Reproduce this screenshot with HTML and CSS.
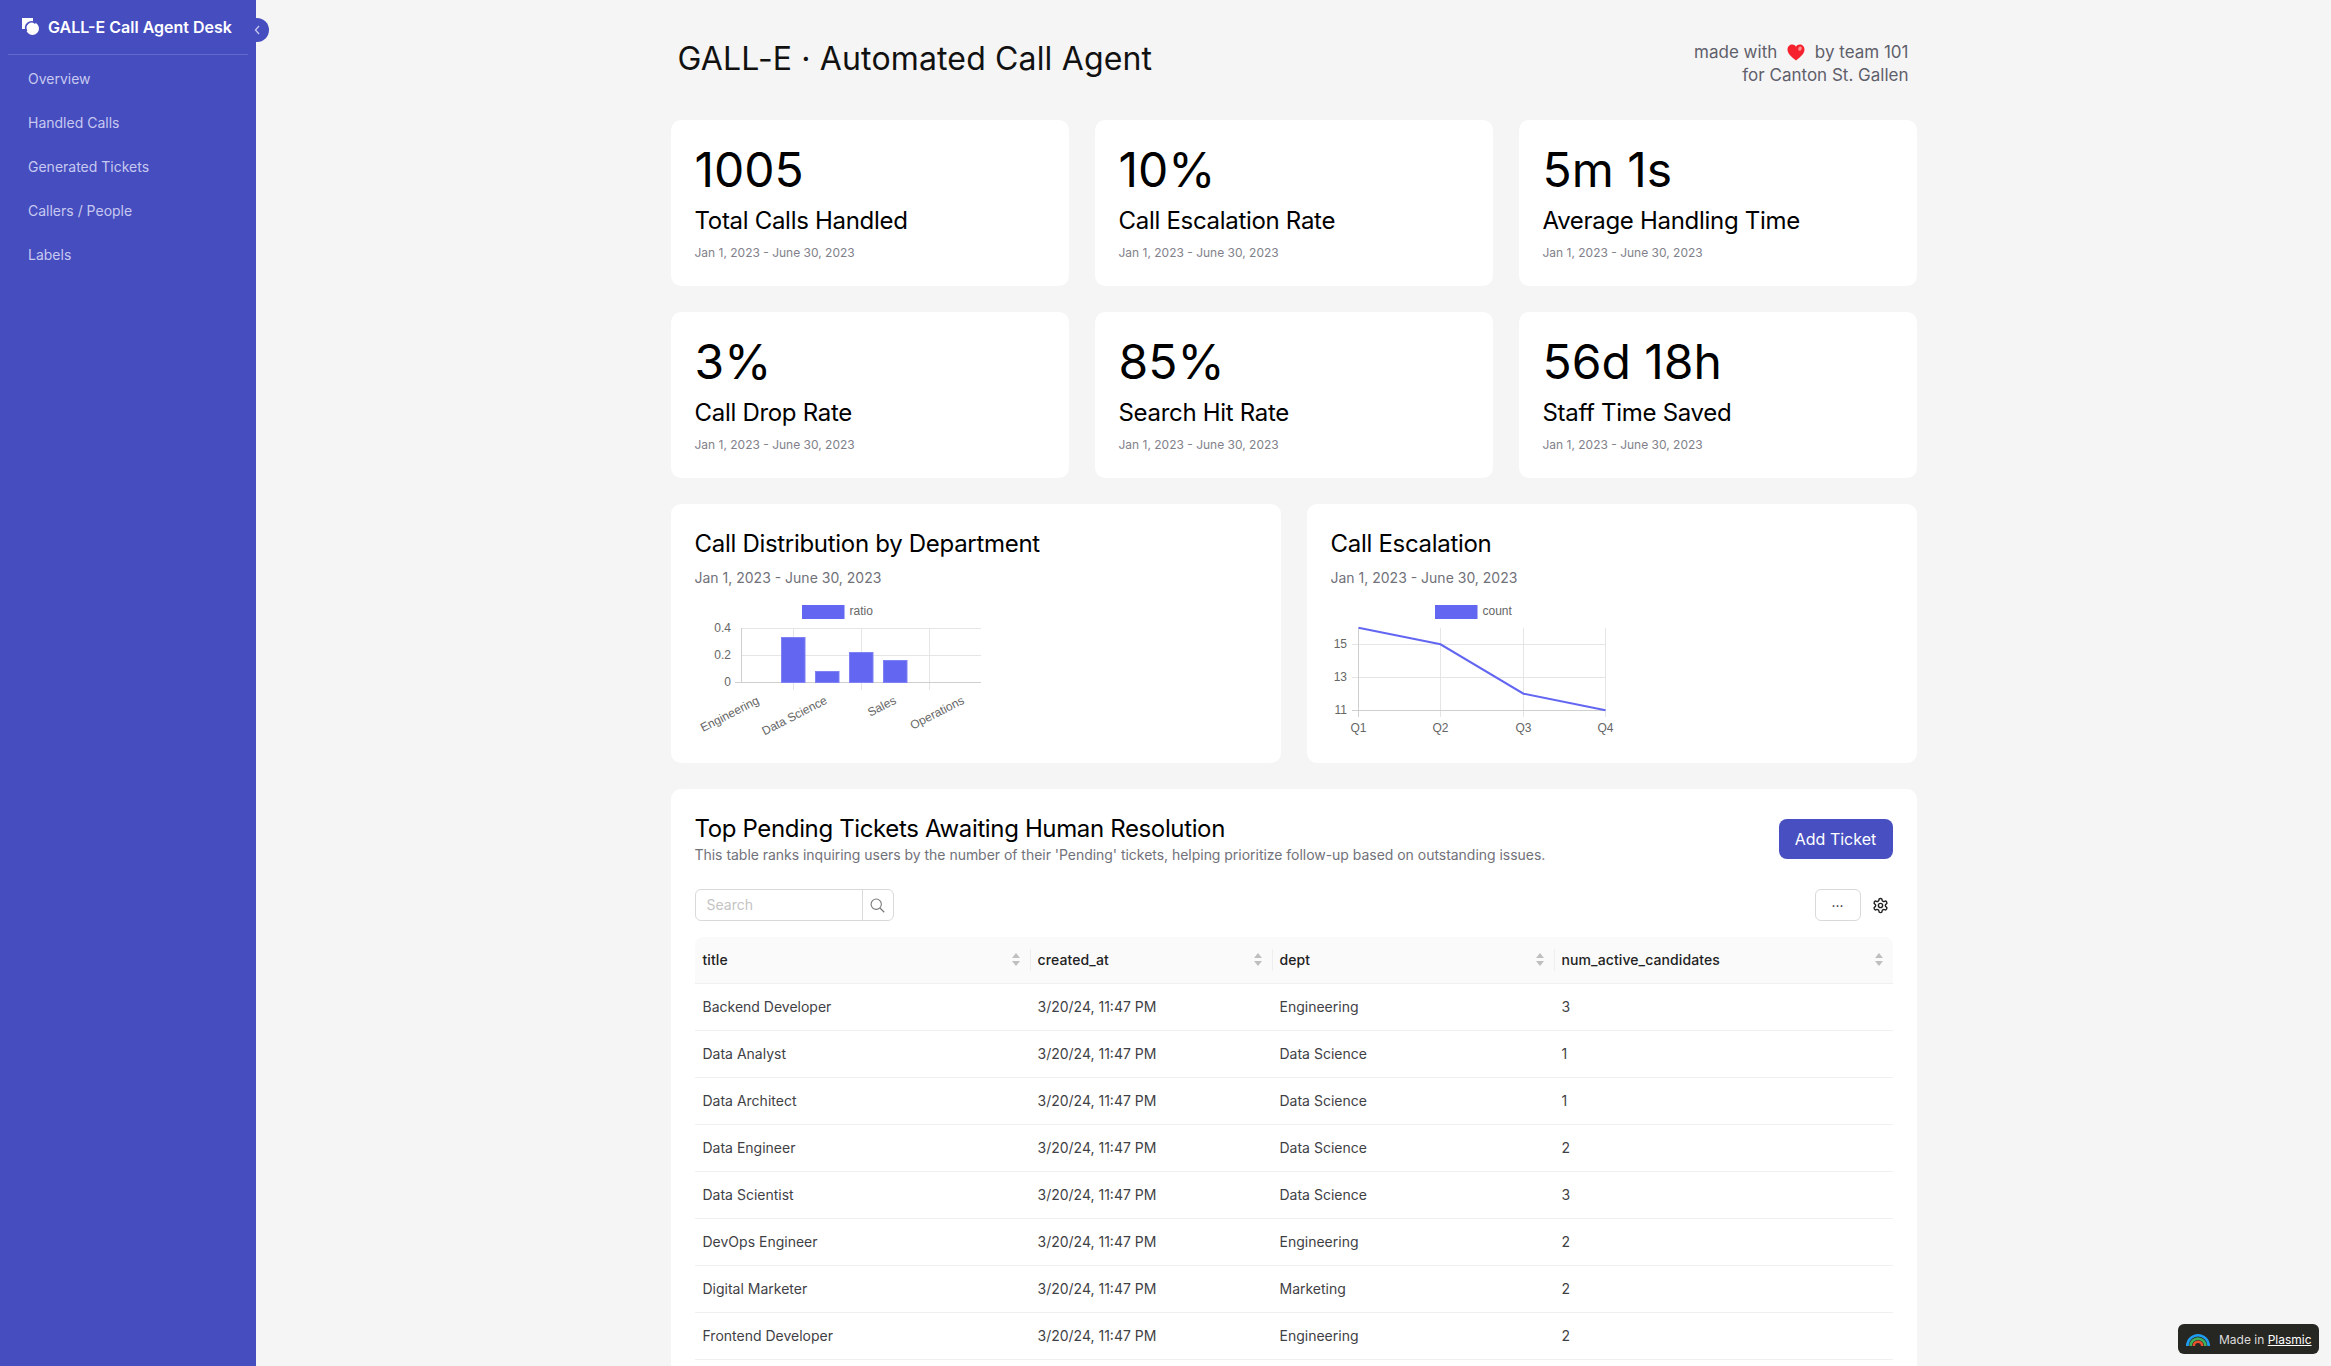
FILE: index.html
```html
<!DOCTYPE html>
<html lang="en">
<head>
    <meta charset="UTF-8">
    <meta name="viewport" content="width=device-width, initial-scale=1.0">
    <title>GALL-E Call Agent Desk</title>
    <link rel="stylesheet" href="styles.css">
</head>
<body>

<div class="app">
    <aside class="sidebar">
        <div class="brand">
            <svg class="brand-logo" width="17" height="17" viewBox="0 0 17 17">
                <rect x="0" y="0" width="11" height="11" fill="#fff"/>
                <circle cx="10.5" cy="10.5" r="6.5" fill="#fff"/>
                <path d="M4.6 13 A6 6 0 0 1 13.5 5.2" fill="none" stroke="#464dbf" stroke-width="1.8"/>
            </svg>
            <span>GALL-E Call Agent Desk</span>
        </div>
        <nav class="side-nav">
            <a href="#">Overview</a>
            <a href="#">Handled Calls</a>
            <a href="#">Generated Tickets</a>
            <a href="#">Callers / People</a>
            <a href="#">Labels</a>
        </nav>
        <button class="collapse" aria-label="Collapse">
            <svg width="8" height="12" viewBox="0 0 8 12"><path d="M6 2 L2.5 6 L6 10" fill="none" stroke="#c7c9f0" stroke-width="1.3"/></svg>
        </button>
    </aside>

    <main class="main">
        <div class="content">
            <header class="page-head">
                <h1>GALL-E · Automated Call Agent</h1>
                <div class="credit">
                    <div>made with
                        <svg class="heart" width="18" height="17" viewBox="0 0 18 17">
                            <path d="M9 16.5 C4 12.5 0.5 9.5 0.5 5.5 C0.5 2.5 2.8 0.5 5.2 0.5 C6.8 0.5 8.2 1.3 9 2.8 C9.8 1.3 11.2 0.5 12.8 0.5 C15.2 0.5 17.5 2.5 17.5 5.5 C17.5 9.5 14 12.5 9 16.5 Z" fill="#f5222d"/>
                            <ellipse cx="13" cy="4.6" rx="1.7" ry="2.2" fill="#ff8f8f" transform="rotate(30 13 4.6)"/>
                        </svg>
                        by team 101</div>
                    <div>for Canton St. Gallen</div>
                </div>
            </header>

            <section class="stats">
                <div class="card stat"><div class="stat-value">1005</div><div class="stat-label">Total Calls Handled</div><div class="stat-date">Jan 1, 2023 - June 30, 2023</div></div>
                <div class="card stat"><div class="stat-value">10%</div><div class="stat-label">Call Escalation Rate</div><div class="stat-date">Jan 1, 2023 - June 30, 2023</div></div>
                <div class="card stat"><div class="stat-value">5m 1s</div><div class="stat-label">Average Handling Time</div><div class="stat-date">Jan 1, 2023 - June 30, 2023</div></div>
                <div class="card stat"><div class="stat-value">3%</div><div class="stat-label">Call Drop Rate</div><div class="stat-date">Jan 1, 2023 - June 30, 2023</div></div>
                <div class="card stat"><div class="stat-value">85%</div><div class="stat-label">Search Hit Rate</div><div class="stat-date">Jan 1, 2023 - June 30, 2023</div></div>
                <div class="card stat"><div class="stat-value">56d 18h</div><div class="stat-label">Staff Time Saved</div><div class="stat-date">Jan 1, 2023 - June 30, 2023</div></div>
            </section>

            <section class="charts">
                <div class="card chart-card">
                    <h2>Call Distribution by Department</h2>
                    <div class="chart-date">Jan 1, 2023 - June 30, 2023</div>
                    <svg class="chart" width="300" height="139" viewBox="0 0 300 139">
                        <rect class="swatch" x="107" y="5" width="42.5" height="14"/>
                        <text x="154.5" y="14.5">ratio</text>
                        <path class="grid" d="M98.5 28V90 M166.5 28V90 M234.5 28V90 M46.5 28.5H286 M46.5 55.5H286"/>
                        <path class="axis" d="M46.5 28V83 M40 82.5H286"/>
                        <rect class="bar" x="86.5" y="37.5" width="23.5" height="45"/>
                        <rect class="bar" x="120.5" y="71.5" width="23.5" height="11"/>
                        <rect class="bar" x="154.5" y="52.5" width="23.5" height="30"/>
                        <rect class="bar" x="188.5" y="60.5" width="23.5" height="22"/>
                        <text x="36" y="31.5" text-anchor="end">0.4</text>
                        <text x="36" y="58.5" text-anchor="end">0.2</text>
                        <text x="36" y="85.5" text-anchor="end">0</text>
                        <text text-anchor="end" transform="translate(65 103) rotate(-27)">Engineering</text>
                        <text text-anchor="end" transform="translate(133 103) rotate(-27)">Data Science</text>
                        <text text-anchor="end" transform="translate(202 103) rotate(-27)">Sales</text>
                        <text text-anchor="end" transform="translate(270 103) rotate(-27)">Operations</text>
                    </svg>
                </div>
                <div class="card chart-card">
                    <h2>Call Escalation</h2>
                    <div class="chart-date">Jan 1, 2023 - June 30, 2023</div>
                    <svg class="chart" width="300" height="139" viewBox="0 0 300 139">
                        <rect class="swatch" x="104" y="5" width="42.5" height="14"/>
                        <text x="151.5" y="14.5">count</text>
                        <path class="grid" d="M109.5 28V117 M192.5 28V117 M274.5 28V117 M21 44.5H274.5 M21 77.5H274.5"/>
                        <path class="axis" d="M27.5 28V117 M21 110.5H274.5"/>
                        <polyline class="line" points="27.5,27.7 109.5,44.3 192.5,93.7 274.5,110.3"/>
                        <text x="16" y="47.5" text-anchor="end">15</text>
                        <text x="16" y="80.5" text-anchor="end">13</text>
                        <text x="16" y="113.5" text-anchor="end">11</text>
                        <text x="27.5" y="132" text-anchor="middle">Q1</text>
                        <text x="109.5" y="132" text-anchor="middle">Q2</text>
                        <text x="192.5" y="132" text-anchor="middle">Q3</text>
                        <text x="274.5" y="132" text-anchor="middle">Q4</text>
                    </svg>
                </div>
            </section>

            <section class="card tickets">
                <div class="tickets-head">
                    <div>
                        <h2>Top Pending Tickets Awaiting Human Resolution</h2>
                        <p>This table ranks inquiring users by the number of their 'Pending' tickets, helping prioritize follow-up based on outstanding issues.</p>
                    </div>
                    <button class="add-btn">Add Ticket</button>
                </div>
                <div class="toolbar">
                    <div class="search">
                        <span class="search-input">Search</span>
                        <span class="search-btn">
                            <svg width="15" height="15" viewBox="0 0 14 14"><circle cx="5.8" cy="5.8" r="4.8" fill="none" stroke="#777" stroke-width="1"/><path d="M9.3 9.3 L13.3 13.3" stroke="#777" stroke-width="1.1"/></svg>
                        </span>
                    </div>
                    <div class="tools">
                        <button class="more-btn">···</button>
                        <svg class="gear" width="17" height="17" viewBox="0 0 24 24" fill="none" stroke="#222" stroke-width="2" stroke-linejoin="round">
                            <path d="M12.22 2h-.44a2 2 0 0 0-2 2v.18a2 2 0 0 1-1 1.73l-.43.25a2 2 0 0 1-2 0l-.15-.08a2 2 0 0 0-2.73.73l-.22.38a2 2 0 0 0 .73 2.73l.15.1a2 2 0 0 1 1 1.72v.51a2 2 0 0 1-1 1.74l-.15.09a2 2 0 0 0-.73 2.73l.22.38a2 2 0 0 0 2.73.73l.15-.08a2 2 0 0 1 2 0l.43.25a2 2 0 0 1 1 1.73V20a2 2 0 0 0 2 2h.44a2 2 0 0 0 2-2v-.18a2 2 0 0 1 1-1.73l.43-.25a2 2 0 0 1 2 0l.15.08a2 2 0 0 0 2.73-.73l.22-.39a2 2 0 0 0-.73-2.73l-.15-.08a2 2 0 0 1-1-1.74v-.5a2 2 0 0 1 1-1.74l.15-.09a2 2 0 0 0 .73-2.73l-.22-.38a2 2 0 0 0-2.73-.73l-.15.08a2 2 0 0 1-2 0l-.43-.25a2 2 0 0 1-1-1.73V4a2 2 0 0 0-2-2z"/>
                            <circle cx="12" cy="12" r="3"/>
                        </svg>
                    </div>
                </div>
                <table class="data-table">
                    <colgroup><col class="col-title"><col class="col-created"><col class="col-dept"><col></colgroup>
                    <thead>
                        <tr>
                            <th><span>title</span><i class="sort"></i></th>
                            <th><span>created_at</span><i class="sort"></i></th>
                            <th><span>dept</span><i class="sort"></i></th>
                            <th><span>num_active_candidates</span><i class="sort"></i></th>
                        </tr>
                    </thead>
                    <tbody>
                        <tr><td>Backend Developer</td><td>3/20/24, 11:47 PM</td><td>Engineering</td><td>3</td></tr>
                        <tr><td>Data Analyst</td><td>3/20/24, 11:47 PM</td><td>Data Science</td><td>1</td></tr>
                        <tr><td>Data Architect</td><td>3/20/24, 11:47 PM</td><td>Data Science</td><td>1</td></tr>
                        <tr><td>Data Engineer</td><td>3/20/24, 11:47 PM</td><td>Data Science</td><td>2</td></tr>
                        <tr><td>Data Scientist</td><td>3/20/24, 11:47 PM</td><td>Data Science</td><td>3</td></tr>
                        <tr><td>DevOps Engineer</td><td>3/20/24, 11:47 PM</td><td>Engineering</td><td>2</td></tr>
                        <tr><td>Digital Marketer</td><td>3/20/24, 11:47 PM</td><td>Marketing</td><td>2</td></tr>
                        <tr><td>Frontend Developer</td><td>3/20/24, 11:47 PM</td><td>Engineering</td><td>2</td></tr>
                        <tr><td></td><td></td><td></td><td></td></tr>
                    </tbody>
                </table>
            </section>
        </div>
    </main>
</div>

<div class="plasmic-badge">
    <svg width="24" height="14" viewBox="0 0 24 14" fill="none" stroke-width="2.6">
        <path d="M1.3 14 A10.7 10.7 0 0 1 22.7 14" stroke="#1f9cf0"/>
        <path d="M4.6 14 A7.4 7.4 0 0 1 19.4 14" stroke="#3fae5a"/>
        <path d="M7.8 14 A4.2 4.2 0 0 1 16.2 14" stroke="#e8502e"/>
    </svg>
    <span>Made in <u>Plasmic</u></span>
</div>

</body>
</html>
```

FILE: styles.css
```css
* {
    box-sizing: border-box;
}
html, body {
    height: 100%;
    margin: 0;
    overflow: hidden;
}
body {
    font-family: Inter, "Liberation Sans", sans-serif;
    background-color: #f5f5f5;
    color: #000;
}
h1, h2, p {
    margin: 0;
    font-weight: 400;
}
button {
    font-family: inherit;
    cursor: pointer;
}
.app {
    display: flex;
    height: 100vh;
}

/* sidebar */
.sidebar {
    position: relative;
    flex: 0 0 256px;
    padding: 0 8px;
    background-color: #464dbf;
}
.brand {
    display: flex;
    align-items: center;
    gap: 9px;
    height: 55px;
    padding: 0 14px 1px;
    border-bottom: 1px solid #6268cc;
    color: #fff;
    font-size: 16px;
    font-weight: 600;
}
.brand-logo {
    margin-top: -1px;
}
.side-nav {
    display: flex;
    flex-direction: column;
    padding-top: 1px;
}
.side-nav a {
    display: flex;
    align-items: center;
    height: 44px;
    padding-left: 20px;
    color: #c7c9f0;
    font-size: 14px;
    text-decoration: none;
}
.collapse {
    position: absolute;
    top: 18px;
    right: -13px;
    display: flex;
    align-items: center;
    justify-content: center;
    width: 24px;
    height: 24px;
    padding: 0;
    border: none;
    border-radius: 50%;
    background-color: #464dbf;
}

/* main column */
.main {
    flex: 1;
    min-width: 0;
}
.content {
    width: 1246px;
    margin: 0 auto;
}
.page-head {
    display: flex;
    justify-content: space-between;
    height: 120px;
    padding: 40px 8px 0 7px;
}
.page-head h1 {
    font-size: 32px;
    line-height: 38px;
    letter-spacing: 0.15px;
    color: #111;
}
.credit {
    margin-top: 1px;
    font-size: 17px;
    line-height: 23px;
    text-align: right;
    color: #5f5f6b;
}
.heart {
    margin: 0 5px;
    vertical-align: -3px;
}
.card {
    border-radius: 10px;
    background-color: #fff;
}

/* stat cards */
.stats {
    display: grid;
    grid-template-columns: repeat(3, 398px);
    gap: 26px;
}
.stat {
    height: 166px;
    padding: 21px 24px 0;
}
.stat-value {
    font-size: 48px;
    line-height: 58px;
}
.stat-label {
    margin-top: 6px;
    font-size: 24px;
    line-height: 32px;
    letter-spacing: -0.3px;
}
.stat-date {
    margin-top: 8px;
    font-size: 12px;
    line-height: 16px;
    color: #81818a;
}

/* charts */
.charts {
    display: grid;
    grid-template-columns: repeat(2, 610px);
    gap: 26px;
    margin-top: 26px;
}
.chart-card {
    height: 259px;
    padding: 24px 24px 0;
}
.chart-card h2 {
    font-size: 24px;
    line-height: 32px;
    letter-spacing: -0.3px;
}
.chart-date {
    margin-top: 8px;
    font-size: 14px;
    line-height: 20px;
    color: #71717a;
}
.chart {
    display: block;
    margin-top: 12px;
    font-family: "Liberation Sans", Arial, sans-serif;
    font-size: 12px;
}
.chart text {
    fill: #666;
}
.chart .grid {
    fill: none;
    stroke: #e5e5e5;
}
.chart .axis {
    fill: none;
    stroke: #cfcfcf;
}
.chart .swatch {
    fill: #6366f1;
}
.chart .bar {
    fill: #6366f1;
    stroke: #7f82f5;
}
.chart .line {
    fill: none;
    stroke: #6366f1;
    stroke-width: 2;
}

/* tickets table */
.tickets {
    margin-top: 26px;
    padding: 24px 24px 0;
}
.tickets-head {
    display: flex;
    justify-content: space-between;
    align-items: flex-start;
}
.tickets-head h2 {
    font-size: 24px;
    line-height: 32px;
    letter-spacing: -0.36px;
}
.tickets-head p {
    margin-top: 0;
    font-size: 14px;
    line-height: 20px;
    letter-spacing: -0.03px;
    color: #71717a;
}
.add-btn {
    width: 114px;
    height: 40px;
    margin-top: 6px;
    padding-bottom: 2px;
    border: none;
    border-radius: 8px;
    background-color: #484fc1;
    color: #fff;
    font-size: 16px;
}
.toolbar {
    display: flex;
    justify-content: space-between;
    align-items: center;
    margin-top: 24px;
}
.search {
    display: flex;
    width: 199px;
    height: 32px;
    border: 1px solid #d9d9d9;
    border-radius: 6px;
}
.search-input {
    flex: 1;
    padding-left: 11px;
    font-size: 14px;
    line-height: 30px;
    color: #c4c4c4;
}
.search-btn {
    display: flex;
    align-items: center;
    justify-content: center;
    width: 31px;
    border-left: 1px solid #d9d9d9;
}
.tools {
    display: flex;
    align-items: center;
    gap: 11px;
    padding-right: 4px;
}
.more-btn {
    width: 46px;
    height: 32px;
    padding: 0;
    border: 1px solid #d9d9d9;
    border-radius: 6px;
    background-color: #fff;
    font-size: 14px;
    color: #333;
}
.gear {
    display: block;
}
.data-table {
    width: 1198px;
    margin-top: 16px;
    border-collapse: collapse;
    table-layout: fixed;
    font-size: 14px;
}
.col-title {
    width: 335px;
}
.col-created {
    width: 242px;
}
.col-dept {
    width: 282px;
}
.data-table th {
    position: relative;
    height: 46px;
    padding: 0 8px;
    border-bottom: 1px solid #f0f0f0;
    background-color: #fafafa;
    text-align: left;
    font-weight: 500;
    letter-spacing: 0.1px;
    color: #222;
}
.data-table th:first-child {
    border-top-left-radius: 8px;
}
.data-table th:last-child {
    border-top-right-radius: 8px;
}
.data-table th + th::before {
    content: "";
    position: absolute;
    top: 12px;
    bottom: 12px;
    left: 0;
    width: 1px;
    background-color: #eee;
}
.sort {
    position: absolute;
    top: 16px;
    right: 10px;
    width: 8px;
    height: 13px;
}
.sort::before, .sort::after {
    content: "";
    position: absolute;
    left: 0;
    border-left: 4px solid transparent;
    border-right: 4px solid transparent;
}
.sort::before {
    top: 0;
    border-bottom: 5px solid #bfbfbf;
}
.sort::after {
    bottom: 0;
    border-top: 5px solid #bfbfbf;
}
.data-table td {
    height: 47px;
    padding: 0 8px;
    border-bottom: 1px solid #f0f0f0;
    color: #3f3f46;
}

/* badge */
.plasmic-badge {
    position: fixed;
    right: 12px;
    bottom: 12px;
    display: flex;
    align-items: center;
    gap: 9px;
    width: 141px;
    height: 30px;
    padding-left: 8px;
    border-radius: 6px;
    background-color: #262622;
    color: #ddd;
    font-size: 12px;
    white-space: nowrap;
}
.plasmic-badge u {
    color: #fff;
}
```
